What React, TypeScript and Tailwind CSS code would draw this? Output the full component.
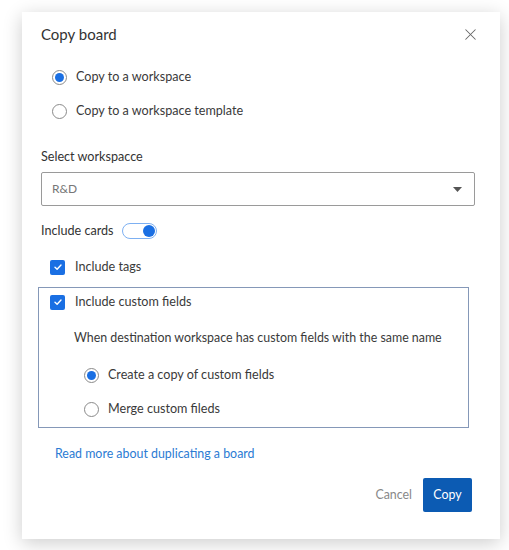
import React, { useState } from "react";
import { X } from "lucide-react";

function Radio({ checked, label, onClick }: { checked: boolean; label: string; onClick: () => void }) {
    return (
        <div onClick={onClick} className="flex items-center h-[34px] cursor-pointer">
            <span className="w-[15px] h-[15px] rounded-full border border-[#8a8a8a] bg-white flex items-center justify-center">
                {checked && <span className="w-[9px] h-[9px] rounded-full bg-[#1a6fe3]" />}
            </span>
            <span className="ml-[9px] text-[12.6px] text-[#3a3a3a]">{label}</span>
        </div>
    );
}

function Checkbox({ checked, label, onClick }: { checked: boolean; label: string; onClick: () => void }) {
    return (
        <div onClick={onClick} className="flex items-center h-[20px] cursor-pointer">
            <span className={"w-[15px] h-[15px] rounded-[2px] flex items-center justify-center " + (checked ? "bg-[#1a6fe3]" : "border border-[#8a8a8a] bg-white")}>
                {checked && (
                    <svg width="10" height="10" viewBox="0 0 10 10" fill="none">
                        <path d="M2 5.2L4.1 7.2L8 3" stroke="white" strokeWidth="1.4" strokeLinecap="round" strokeLinejoin="round" />
                    </svg>
                )}
            </span>
            <span className="ml-[10px] text-[12.6px] text-[#3a3a3a]">{label}</span>
        </div>
    );
}

export default function App() {
    const [target, setTarget] = useState("workspace");
    const [cards, setCards] = useState(true);
    const [tags, setTags] = useState(true);
    const [fields, setFields] = useState(true);
    const [mode, setMode] = useState("copy");

    return (
        <div className="w-[509px] h-[550px] bg-white pt-[12px] pl-[22px]" style={{ fontFamily: "Lato, 'Open Sans', sans-serif" }}>
            <div className="w-[478px] h-[527px] bg-white shadow-[0_4px_18px_rgba(0,0,0,0.2)] flex flex-col pl-[19px] pr-[25px]">
                {/* header */}
                <div className="flex items-center justify-between h-[45px]">
                    <h1 className="text-[15px] text-[#333]">Copy board</h1>
                    <X size={19} strokeWidth={1.3} className="text-[#666] -mr-[5px]" />
                </div>

                <div className="mt-[3px] ml-[11px]">
                    <Radio checked={target === "workspace"} label="Copy to a workspace" onClick={() => setTarget("workspace")} />
                    <Radio checked={target === "template"} label="Copy to a workspace template" onClick={() => setTarget("template")} />
                </div>

                <label className="mt-[20px] h-[18px] flex items-center text-[12.6px] text-[#333]">Select workspacce</label>
                <div className="mt-[6px] h-[34px] border border-[#9a9a9a] rounded-[2px] flex items-center justify-between pl-[10px] pr-[12px]">
                    <span className="text-[12px] text-[#777]">R&amp;D</span>
                    <svg width="9" height="5" viewBox="0 0 9 5">
                        <path d="M0 0H9L4.5 5Z" fill="#555" />
                    </svg>
                </div>

                <div className="mt-[15px] h-[20px] flex items-center">
                    <span className="text-[12.6px] text-[#333]">Include cards</span>
                    <button
                        onClick={() => setCards(!cards)}
                        className={"ml-[8px] w-[35px] h-[16px] rounded-full border-[1.5px] border-[#7db0f2] bg-white flex items-center px-[1px] " + (cards ? "justify-end" : "justify-start")}
                    >
                        <span className="w-[12px] h-[12px] rounded-full bg-[#1a6fe3]" />
                    </button>
                </div>

                <div className="mt-[16px] ml-[9px]">
                    <Checkbox checked={tags} label="Include tags" onClick={() => setTags(!tags)} />
                </div>

                <div className="mt-[10px] -ml-[3px] w-[431px] border border-[#8598b8] pt-[4px] pb-[1px] pl-[11px]">
                    <Checkbox checked={fields} label="Include custom fields" onClick={() => setFields(!fields)} />
                    <p className="mt-[16px] ml-[24px] h-[20px] flex items-center text-[12.4px] text-[#3a3a3a]">
                        When destination workspace has custom fields with the same name
                    </p>
                    <div className="mt-[10px] ml-[34px]">
                        <Radio checked={mode === "copy"} label="Create a copy of custom fields" onClick={() => setMode("copy")} />
                        <Radio checked={mode === "merge"} label="Merge custom fileds" onClick={() => setMode("merge")} />
                    </div>
                </div>

                <a href="#" className="mt-[16px] ml-[14px] h-[20px] flex items-center text-[12.4px] text-[#2b7bd3]">
                    Read more about duplicating a board
                </a>

                <div className="mt-[14px] flex items-center justify-end pr-[3px]">
                    <button className="text-[12.4px] text-[#888] mr-[11px]">Cancel</button>
                    <button className="w-[49px] h-[34px] rounded-[2px] bg-[#0c5bb3] text-white text-[12.4px]">Copy</button>
                </div>
            </div>
        </div>
    );
}
